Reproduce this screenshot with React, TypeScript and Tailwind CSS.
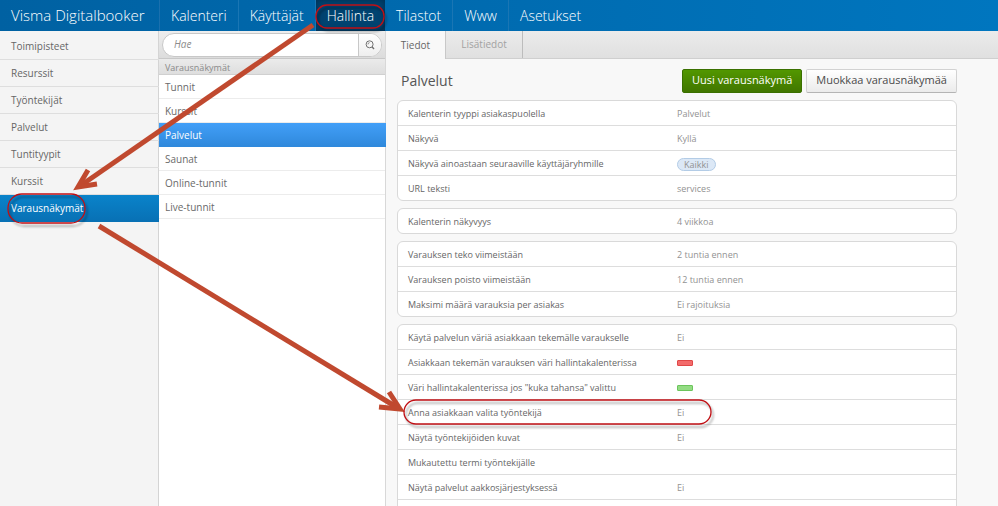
import React from 'react';

const navItems = ['Kalenteri', 'Käyttäjät', 'Hallinta', 'Tilastot', 'Www', 'Asetukset'];

const sections = [
  'Toimipisteet',
  'Resurssit',
  'Työntekijät',
  'Palvelut',
  'Tuntityypit',
  'Kurssit',
  'Varausnäkymät',
];

const views = ['Tunnit', 'Kurssit', 'Palvelut', 'Saunat', 'Online-tunnit', 'Live-tunnit'];

interface Setting {
  label: string;
  value?: string;
  kind?: 'tag' | 'red' | 'green';
}

const groups: Setting[][] = [
  [
    { label: 'Kalenterin tyyppi asiakaspuolella', value: 'Palvelut' },
    { label: 'Näkyvä', value: 'Kyllä' },
    { label: 'Näkyvä ainoastaan seuraaville käyttäjäryhmille', value: 'Kaikki', kind: 'tag' },
    { label: 'URL teksti', value: 'services' },
  ],
  [{ label: 'Kalenterin näkyvyys', value: '4 viikkoa' }],
  [
    { label: 'Varauksen teko viimeistään', value: '2 tuntia ennen' },
    { label: 'Varauksen poisto viimeistään', value: '12 tuntia ennen' },
    { label: 'Maksimi määrä varauksia per asiakas', value: 'Ei rajoituksia' },
  ],
  [
    { label: 'Käytä palvelun väriä asiakkaan tekemälle varaukselle', value: 'Ei' },
    { label: 'Asiakkaan tekemän varauksen väri hallintakalenterissa', kind: 'red' },
    { label: 'Väri hallintakalenterissa jos "kuka tahansa" valittu', kind: 'green' },
    { label: 'Anna asiakkaan valita työntekijä', value: 'Ei' },
    { label: 'Näytä työntekijöiden kuvat', value: 'Ei' },
    { label: 'Mukautettu termi työntekijälle' },
    { label: 'Näytä palvelut aakkosjärjestyksessä', value: 'Ei' },
    { label: '' },
  ],
];

const SettingValue: React.FC<{ setting: Setting }> = ({ setting }) => {
  if (setting.kind === 'tag') {
    return (
      <span className="block rounded-full border border-[#b3cce6] bg-[#dce8f6] px-1.5 leading-[11px]">
        {setting.value}
      </span>
    );
  }
  if (setting.kind === 'red') {
    return <span className="block h-1.5 w-4 rounded-[1px] border border-[#e04848] bg-[#f36b6b]" />;
  }
  if (setting.kind === 'green') {
    return <span className="block h-1.5 w-4 rounded-[1px] border border-[#6cc45c] bg-[#93dc83]" />;
  }
  return <>{setting.value}</>;
};

const Header: React.FC = () => (
  <header className="flex h-[31px] shrink-0 bg-linear-to-r from-[#0061a2] to-[#0076bf] text-white">
    <a href="#" className="flex w-[160px] shrink-0 items-center border-r border-[#1a70ae] pl-[11px] text-[15px] font-light whitespace-nowrap">
      Visma Digitalbooker
    </a>
    <nav className="flex">
      {navItems.map((item) => (
        <a
          key={item}
          href="#"
          className={`flex items-center px-[11px] text-[14px] font-light ${
            item === 'Hallinta'
              ? 'bg-[#004370] shadow-[inset_0_0_6px_#002f52]'
              : 'border-r border-[#1a76b4] last:border-r-0'
          }`}
        >
          {item}
        </a>
      ))}
    </nav>
  </header>
);

const Sidebar: React.FC = () => (
  <nav className="w-[159px] shrink-0 border-r border-[#d4d4d4] bg-[#f4f4f4] pt-0.5">
    {sections.map((section) => (
      <a
        key={section}
        href="#"
        className={`-mr-px flex h-[27px] items-center border-b pl-[11px] text-[10px] ${
          section === 'Varausnäkymät'
            ? 'border-[#0871b5] bg-linear-to-b from-[#0a83ca] to-[#0871b5] text-white'
            : 'border-[#dedede] text-[#666666]'
        }`}
      >
        {section}
      </a>
    ))}
  </nav>
);

const ViewList: React.FC = () => (
  <div className="w-[227px] shrink-0 border-r border-[#d8d8d8] bg-white">
    <form className="flex h-7 items-center border-b border-[#c8c8c8] bg-linear-to-b from-[#eeeeee] to-[#dcdcdc] px-[3px]">
      <div className="flex h-6 w-full overflow-hidden rounded-full border border-[#c8c8c8] bg-white">
        <input
          type="search"
          aria-label="Hae"
          placeholder="Hae"
          className="min-w-0 flex-1 pl-[11px] text-[10px] italic outline-none placeholder:text-[#8c8c8c]"
        />
        <button
          type="button"
          aria-label="Etsi"
          className="flex w-[23px] items-center justify-center border-l border-[#c8c8c8] bg-linear-to-b from-white to-[#eeeeee]"
        >
          <svg viewBox="0 0 10 10" className="size-[10px]" fill="none" stroke="#707070">
            <circle cx="4.6" cy="4.3" r="3.5" />
            <path d="M3 4.4A1.7 1.7 0 0 1 4.6 2.6" strokeWidth="0.8" />
            <path d="M7 6.8 9 9" strokeWidth="1.4" />
          </svg>
        </button>
      </div>
    </form>
    <h2 className="flex h-4 items-center border-b border-[#d0d0d0] bg-linear-to-b from-[#ebebeb] to-[#dedede] pt-0.5 pl-1.5 text-[9px] text-[#8a8a8a]">
      Varausnäkymät
    </h2>
    <ul>
      {views.map((view) => (
        <li key={view}>
          <a
            href="#"
            className={`flex h-6 items-center border-b pt-0.5 pl-1.5 text-[10px] ${
              view === 'Palvelut'
                ? '-mr-px border-[#2f89dc] bg-linear-to-b from-[#429ff8] to-[#2f89dc] text-white'
                : 'border-[#ececec] text-[#6a6a6a]'
            }`}
          >
            {view}
          </a>
        </li>
      ))}
    </ul>
  </div>
);

const Details: React.FC = () => (
  <main className="min-w-0 flex-1 overflow-hidden bg-[#f8f8f8]">
    <div className="flex h-7 border-b border-[#cfcfcf] bg-linear-to-b from-[#ebebeb] to-[#e0e0e0] text-[10px]" role="tablist">
      <button type="button" role="tab" aria-selected="true" className="-mb-px w-[60px] border-r border-[#c8c8c8] bg-[#f8f8f8] text-[#666666]">
        Tiedot
      </button>
      <button type="button" role="tab" aria-selected="false" className="w-[77px] border-r border-[#bcbcbc] text-[#a2a2a2]">
        Lisätiedot
      </button>
    </div>
    <div className="pr-[41px] pl-[11px]">
      <div className="flex h-[41px] items-center gap-1 pt-0.5 pl-1">
        <h1 className="flex-1 text-[14px] text-[#555555]">Palvelut</h1>
        <button type="button" className="h-6 rounded-xs border border-[#3a7000] bg-linear-to-b from-[#529700] to-[#417600] px-[9px] text-[11px] text-white">
          Uusi varausnäkymä
        </button>
        <button type="button" className="h-6 rounded-xs border border-[#d2d2d2] border-b-[#b4b4b4] bg-linear-to-b from-white to-[#ebebeb] px-[9px] text-[11px] text-[#4a4a4a]">
          Muokkaa varausnäkymää
        </button>
      </div>
      <div className="flex flex-col gap-[7px] text-[9px]">
        {groups.map((group, i) => (
          <dl key={i} className="rounded-md border border-[#d9d9d9] bg-white">
            {group.map((setting) => (
              <div key={setting.label} className="flex h-[25px] items-center border-b border-[#dddddd] pt-0.5 last:h-6 last:border-b-0">
                <dt className="w-1/2 pl-2.5 whitespace-nowrap text-[#666666]">{setting.label}</dt>
                <dd className="flex w-1/2 text-[#929292]">
                  <SettingValue setting={setting} />
                </dd>
              </div>
            ))}
          </dl>
        ))}
      </div>
    </div>
  </main>
);

// Guide arrows and rings drawn on top of the page
const Annotations: React.FC = () => (
  <svg
    width="998"
    height="506"
    viewBox="0 0 998 506"
    fill="none"
    aria-hidden="true"
    className="pointer-events-none absolute top-0 left-0"
  >
    <g stroke="#c0492f" strokeWidth="5">
      <path d="M313 25 80 186" />
      <path d="M88 170 78 187 97 184" />
      <path d="M99 226 398 408" />
      <path d="M389 392 400 409 379 407" />
    </g>
    <g stroke="#c00f14" strokeWidth="1.3" className="drop-shadow-[2px_3px_1px_rgba(0,0,0,0.35)]">
      <rect x="316" y="5" width="68" height="23" rx="11" />
      <rect x="8" y="194" width="77" height="29" rx="14" />
      <rect x="404" y="400" width="307" height="24" rx="12" />
    </g>
  </svg>
);

const App: React.FC = () => (
  <div className="relative flex h-screen flex-col overflow-hidden font-['Open_Sans','Noto_Sans',sans-serif]">
    <Header />
    <div className="flex min-h-0 flex-1">
      <Sidebar />
      <ViewList />
      <Details />
    </div>
    <Annotations />
  </div>
);

export default App;
